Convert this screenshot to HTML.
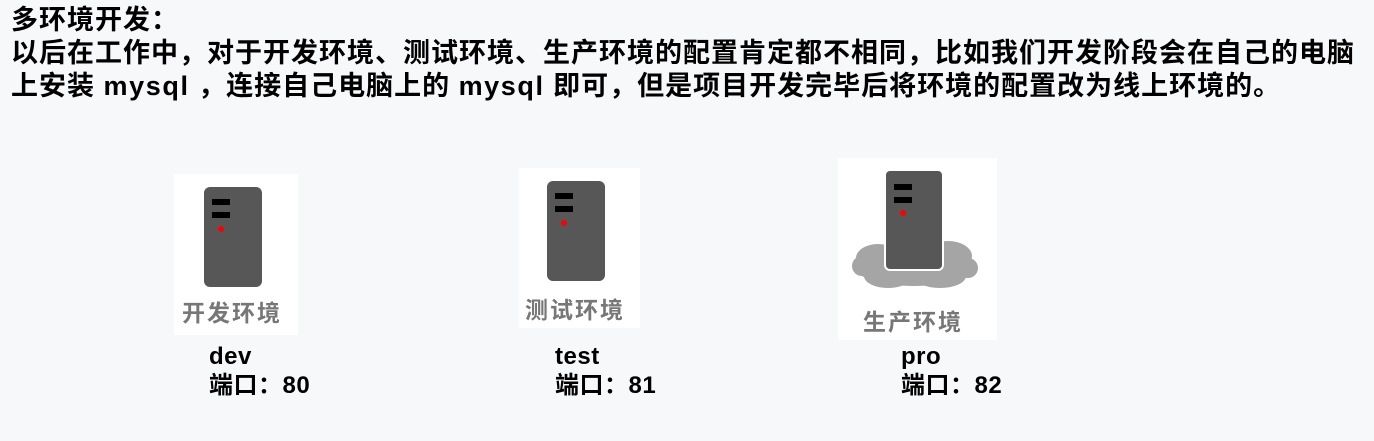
<!DOCTYPE html>
<html><head><meta charset="utf-8"><style>
html,body{margin:0;padding:0}
body{width:1374px;height:441px;background:#f7f8fa;position:relative;overflow:hidden;font-family:"Liberation Sans","Noto Sans CJK SC",sans-serif;color:#000}
.t{position:absolute;left:11px;top:4px;font-size:27px;font-weight:bold;line-height:33px;letter-spacing:1px;white-space:nowrap}
.t span{letter-spacing:1.6px}
.box{position:absolute;background:#fff}
.srv{position:absolute;background:#575757;border-radius:6px}
.srv i{position:absolute;left:8px;width:18px;height:6px;background:#000}
.srv b{position:absolute;left:14px;top:39px;width:6px;height:6px;border-radius:50%;background:#f00}
.lbl{position:absolute;font-size:23px;font-weight:bold;color:#777;letter-spacing:2px;white-space:nowrap}
.cap{position:absolute;font-size:24px;font-weight:bold;line-height:29px;white-space:nowrap;letter-spacing:0.5px}
</style></head><body>
<div class="t">多环境开发：<br>以后在工作中，对于开发环境、测试环境、生产环境的配置肯定都不相同，比如我们开发阶段会在自己的电脑<br>上安装 <span>mysql</span> ，连接自己电脑上的 <span>mysql</span> 即可，但是项目开发完毕后将环境的配置改为线上环境的。</div>

<div class="box" style="left:174px;top:174px;width:124px;height:161px"></div>
<div class="srv" style="left:204px;top:187px;width:58px;height:100px"><i style="top:12px"></i><i style="top:25px"></i><b></b></div>
<div class="lbl" style="left:182px;top:294px">开发环境</div>

<div class="box" style="left:519px;top:168px;width:121px;height:160px"></div>
<div class="srv" style="left:547px;top:181px;width:58px;height:100px"><i style="top:12px"></i><i style="top:25px"></i><b></b></div>
<div class="lbl" style="left:525px;top:291px">测试环境</div>

<div class="box" style="left:838px;top:158px;width:159px;height:182px"></div>
<svg style="position:absolute;left:848px;top:230px" width="132" height="70"><g fill="#a5a5a5">
<ellipse cx="66" cy="36" rx="60" ry="20"/><ellipse cx="30" cy="28" rx="22" ry="14"/><ellipse cx="100" cy="26" rx="24" ry="15"/><ellipse cx="40" cy="46" rx="24" ry="12"/><ellipse cx="92" cy="46" rx="26" ry="12"/><ellipse cx="14" cy="36" rx="10" ry="10"/><ellipse cx="120" cy="38" rx="10" ry="10"/></g></svg>
<div class="srv" style="left:884px;top:169px;width:60px;height:102px;border:2px solid #fff;box-sizing:border-box;background:#575757"><i style="top:13px"></i><i style="top:26px"></i><b style="top:39px"></b></div>
<div class="lbl" style="left:863px;top:303px">生产环境</div>

<div class="cap" style="left:209px;top:342px">dev<br>端口：80</div>
<div class="cap" style="left:555px;top:342px">test<br>端口：81</div>
<div class="cap" style="left:901px;top:342px">pro<br>端口：82</div>
</body></html>
